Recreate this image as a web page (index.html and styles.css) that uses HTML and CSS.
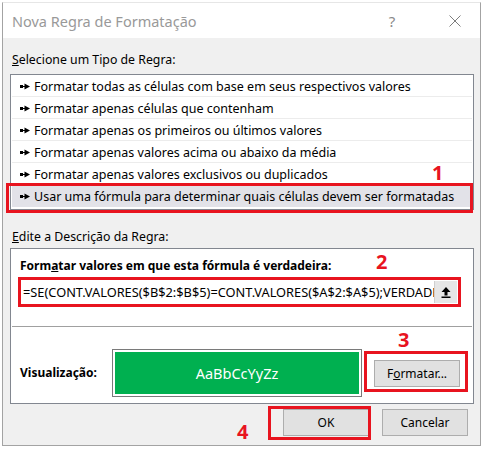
FILE: index.html
```html
<!DOCTYPE html>
<html lang="pt">
<head>
<meta charset="utf-8">
<link rel="stylesheet" href="styles.css">
</head>
<body>
<div class="dialog">
  <div class="titlebar">
    <span class="title">Nova Regra de Formatação</span>
    <span class="help">?</span>
    <span class="close"><svg width="12" height="12" viewBox="0 0 12 12"><path d="M0.5 0.5L11.5 11.5M11.5 0.5L0.5 11.5" stroke="#7d7d7d" stroke-width="1" fill="none"/></svg></span>
  </div>
  <div class="content">
    <div class="label"><u>S</u>elecione um Tipo de Regra:</div>
    <ul class="rulelist">
      <li><svg class="arr" width="10" height="7" viewBox="0 0 10 7"><path d="M0 2h3v3H0zM3 3h2v1H3zM4.5 0.5L10 3.5L4.5 6.5z" fill="#000"/></svg>Formatar todas as células com base em seus respectivos valores</li>
      <li><svg class="arr" width="10" height="7" viewBox="0 0 10 7"><path d="M0 2h3v3H0zM3 3h2v1H3zM4.5 0.5L10 3.5L4.5 6.5z" fill="#000"/></svg>Formatar apenas células que contenham</li>
      <li><svg class="arr" width="10" height="7" viewBox="0 0 10 7"><path d="M0 2h3v3H0zM3 3h2v1H3zM4.5 0.5L10 3.5L4.5 6.5z" fill="#000"/></svg>Formatar apenas os primeiros ou últimos valores</li>
      <li><svg class="arr" width="10" height="7" viewBox="0 0 10 7"><path d="M0 2h3v3H0zM3 3h2v1H3zM4.5 0.5L10 3.5L4.5 6.5z" fill="#000"/></svg>Formatar apenas valores acima ou abaixo da média</li>
      <li><svg class="arr" width="10" height="7" viewBox="0 0 10 7"><path d="M0 2h3v3H0zM3 3h2v1H3zM4.5 0.5L10 3.5L4.5 6.5z" fill="#000"/></svg>Formatar apenas valores exclusivos ou duplicados</li>
      <li class="sel"><svg class="arr" width="10" height="7" viewBox="0 0 10 7"><path d="M0 2h3v3H0zM3 3h2v1H3zM4.5 0.5L10 3.5L4.5 6.5z" fill="#000"/></svg>Usar uma fórmula para determinar quais células devem ser formatadas</li>
    </ul>
    <div class="label label2"><u>E</u>dite a Descrição da Regra:</div>
    <div class="group">
      <div class="bold">Form<u>a</u>tar valores em que esta fórmula é verdadeira:</div>
      <div class="formula">
        <span class="ftext">=SE(CONT.VALORES($B$2:$B$5)=CONT.VALORES($A$2:$A$5);VERDADEIRO;FALSO)</span>
        <span class="pick"><svg width="10" height="11" viewBox="0 0 10 11"><path d="M5 0L9.5 5H6.5V8.5H3.5V5H0.5Z" fill="#000"/><rect x="0.5" y="9.5" width="9" height="1.5" fill="#000"/></svg></span>
      </div>
      <div class="sep"></div>
      <div class="preview-row">
        <span class="bold plabel">Visualização:</span>
        <div class="preview"><div class="swatch">AaBbCcYyZz</div></div>
        <button class="btn fmt">F<u>o</u>rmatar...</button>
      </div>
    </div>
    <div class="actions">
      <button class="btn">OK</button>
      <button class="btn">Cancelar</button>
    </div>
  </div>
  <div class="mark box1"></div>
  <div class="mark box2"></div>
  <div class="mark box3"></div>
  <div class="mark box4"></div>
  <span class="num n1">1</span>
  <span class="num n2">2</span>
  <span class="num n3">3</span>
  <span class="num n4">4</span>
</div>
</body>
</html>
```

FILE: styles.css
```css
* { box-sizing: border-box; margin: 0; padding: 0; }
html, body { background: #fff; }
body {
  margin: 0;
  font-family: "Noto Sans", "Open Sans", sans-serif;
  font-size: 12px;
  color: #000;
}
.dialog {
  position: relative;
  margin: 2px 0 0 2px;
  width: 479px;
  height: 444px;
  border: 1px solid #a3a3a3;
  border-top-color: #e6e6e6;
  background: #f0f0f0;
  display: flex;
  flex-direction: column;
}
.titlebar {
  height: 35px;
  flex: none;
  background: #fff;
  display: flex;
  align-items: center;
  padding-left: 9px;
  color: #999;
}
.title { font-size: 14.5px; flex: 1; }
.help {
  width: 30px;
  text-align: center;
  font-size: 15px;
  color: #8a8a8a;
  margin-right: 28px;
}
.close {
  width: 40px;
  margin-right: 5px;
  display: flex;
  justify-content: center;
}
.content {
  padding: 14px 5px 0 7px;
  display: flex;
  flex-direction: column;
}
.label { line-height: 16px; height: 16px; padding-left: 2px; font-size: 12.3px; }
.rulelist {
  list-style: none;
  margin-top: 6px;
  border: 1px solid #828790;
  background: #fff;
  padding: 0 1px 2px 1px;
  width: 464px;
  font-size: 12.5px;
}
.rulelist li {
  height: 22px;
  border-bottom: 1px solid #ececec;
  display: flex;
  align-items: center;
  padding: 2px 0 0 8px;
  white-space: nowrap;
}
.rulelist li.sel { background: #e2e2e8; border-bottom-color: transparent; }
.arr { margin-right: 4px; flex: none; }
.label2 { margin-top: 19px; }
.group {
  margin-top: 3px;
  width: 464px;
  border: 1px solid #828790;
  background: #fff;
  padding: 9px 0 6px 9px;
}
.bold { font-weight: bold; line-height: 16px; }
.formula {
  margin-top: 5px;
  width: 439px;
  height: 26px;
  border: 1px solid #7a7a7a;
  display: flex;
  align-items: center;
  padding-left: 2px;
  overflow: hidden;
}
.ftext {
  flex: 1;
  white-space: nowrap;
  overflow: hidden;
  font-size: 12.8px;
}
.pick {
  flex: none;
  width: 23px;
  height: 22px;
  margin-right: 1px;
  background: #e6e6e6;
  border-left: 1px solid #cfcfcf;
  display: flex;
  align-items: center;
  justify-content: center;
}
.sep {
  margin: 21px 0 0 -8px;
  width: 460px;
  height: 1px;
  background: #a0a0a0;
}
.preview-row {
  margin-top: 22px;
  display: flex;
  align-items: center;
}
.plabel { width: 92px; }
.preview {
  width: 250px;
  height: 48px;
  border: 1px solid #7a7a7a;
  padding: 2px;
  background: #fff;
}
.swatch {
  height: 100%;
  background: #00b050;
  color: #fff;
  font-size: 14.5px;
  display: flex;
  align-items: center;
  justify-content: center;
}
.btn {
  font-family: inherit;
  font-size: 12px;
  color: #000;
  width: 86px;
  height: 27px;
  background: #e1e1e1;
  border: 1px solid #adadad;
}
.fmt { margin-left: 12px; }
.actions {
  margin-top: 5px;
  display: flex;
  justify-content: flex-end;
  gap: 13px;
  padding-right: 7px;
}
.mark {
  position: absolute;
  border: 3px solid #e8141f;
}
.box1 { left: 3px; top: 180px; width: 467px; height: 30px; }
.box2 { left: 15px; top: 274px; width: 443px; height: 30px; }
.box3 { left: 361px; top: 348px; width: 104px; height: 41px; }
.box4 { left: 265px; top: 403px; width: 103px; height: 34px; }
.num {
  position: absolute;
  color: #e8141f;
  font-weight: bold;
  font-size: 20px;
  line-height: 20px;
  font-family: "Noto Sans", sans-serif;
}
.n1 { left: 429px; top: 160px; }
.n2 { left: 373px; top: 249px; }
.n3 { left: 395px; top: 327px; }
.n4 { left: 234px; top: 419px; }
```
